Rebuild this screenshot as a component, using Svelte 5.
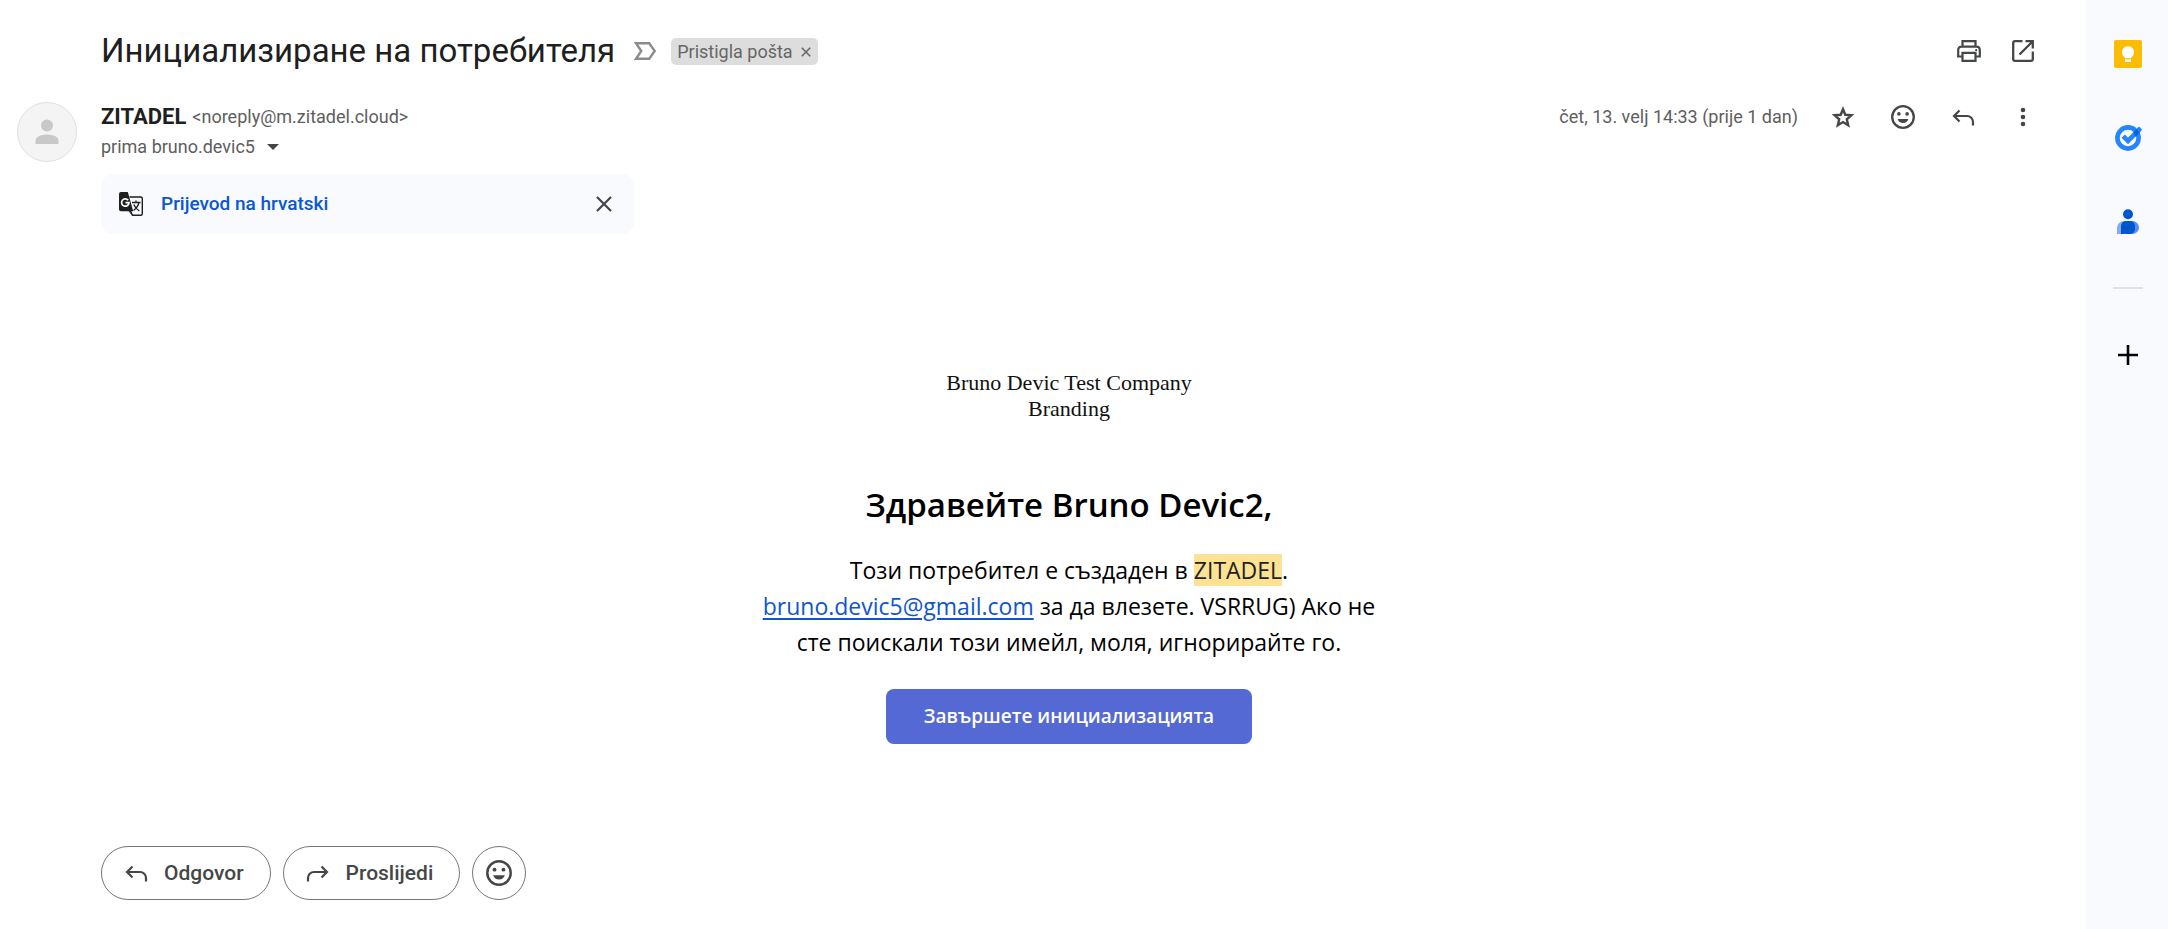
<script>
  const reply = 'M8.500 5.500 3 11l5.500 5.500M3.500 11H16a6 6 0 0 1 6 6v3.500';
</script>

{#snippet smile(size)}
  <svg width={size} height={size} viewBox="0 0 24 24" aria-hidden="true">
    <circle cx="12" cy="12" r="10.8" fill="none" stroke="currentColor" stroke-width="2.3" />
    <circle cx="7.9" cy="8.9" r="1.8" fill="currentColor" />
    <circle cx="16.1" cy="8.9" r="1.8" fill="currentColor" />
    <path d="M6.6 14h10.8c-.8 2.4-2.8 4-5.4 4s-4.600-1.600-5.400-4z" fill="currentColor" />
  </svg>
{/snippet}

{#snippet arrow(flip)}
  <svg class:flip width="24" height="24" viewBox="0 0 24 24" aria-hidden="true">
    <path d={reply} fill="none" stroke="currentColor" stroke-width="2.2" />
  </svg>
{/snippet}

<div class="app">
  <main>
    <header class="subject">
      <h1>Инициализиране на потребителя</h1>
      <svg class="important" width="22" height="18" viewBox="0 0 22 18" aria-hidden="true">
        <path d="M2 1.300h13.200L20.700 9l-5.500 7.700H2L7.300 9z" fill="none" stroke="#8c8c8c" stroke-width="2.4" />
      </svg>
      <span class="tag">
        <span>Pristigla pošta</span>
        <button aria-label="Ukloni oznaku">
          <svg width="10" height="12" viewBox="0 0 10 12"><path d="M.8 2.800l8.400 8.400M9.200 2.800.8 11.200" stroke="#666" stroke-width="1.600" /></svg>
        </button>
      </span>
      <div class="tools">
        <button class="icon" aria-label="Ispis">
          <svg width="24" height="22" viewBox="0 0 24 22">
            <g fill="none" stroke="currentColor" stroke-width="2.200">
              <path d="M5.500 6.500V1.200h13v5.300M5.500 16.500H1.200V10c0-2 1.300-3.400 3.300-3.400h15c2 0 3.300 1.400 3.300 3.400v6.500h-4.300" />
              <path d="M5.500 12.800h13v8h-13z" />
            </g>
            <circle cx="19.200" cy="10.200" r="1.100" fill="currentColor" />
          </svg>
        </button>
        <button class="icon" aria-label="U novom prozoru">
          <svg width="22" height="22" viewBox="0 0 22 22" fill="none" stroke="currentColor" stroke-width="2.300">
            <path d="M10.500 1.200H3a1.800 1.800 0 0 0-1.800 1.800v16A1.800 1.800 0 0 0 3 20.800h16a1.800 1.800 0 0 0 1.800-1.800v-7.500M13.500 1.200h7.300v7.300M20.300 1.700 7.500 14.500" />
          </svg>
        </button>
      </div>
    </header>

    <section class="meta">
      <div class="avatar">
        <svg width="24" height="26" viewBox="0 0 24 26" fill="#c8c8c8" aria-hidden="true">
          <circle cx="12" cy="6.500" r="6" />
          <path d="M.5 25v-3.500C.5 17.800 6 15.500 12 15.500s11.500 2.300 11.500 6V25z" />
        </svg>
      </div>
      <div class="people">
        <div class="line"><strong>ZITADEL</strong><span>&lt;noreply@m.zitadel.cloud&gt;</span></div>
        <div class="line to">
          <span>prima bruno.devic5</span>
          <button aria-label="Prikaži pojedinosti">
            <svg width="12" height="6" viewBox="0 0 12 6"><path d="M0 0h12L6 6z" fill="#444746" /></svg>
          </button>
        </div>
      </div>
      <div class="actions">
        <time>čet, 13. velj 14:33 (prije 1 dan)</time>
        <button class="icon" aria-label="Zvjezdica">
          <svg width="24" height="24" viewBox="0 0 24 24">
            <path d="M12 4.200l2.300 5.600 6.100.5-4.600 4 1.400 6L12 17.100l-5.200 3.200 1.400-6-4.600-4 6.100-.5z" fill="none" stroke="currentColor" stroke-width="2.400" />
          </svg>
        </button>
        <button class="icon" aria-label="Dodaj reakciju">{@render smile(24)}</button>
        <button class="icon" aria-label="Odgovori">{@render arrow(false)}</button>
        <button class="icon" aria-label="Više">
          <svg width="6" height="20" viewBox="0 0 6 20" fill="currentColor"><circle cx="3" cy="3" r="2.300" /><circle cx="3" cy="10" r="2.300" /><circle cx="3" cy="17" r="2.300" /></svg>
        </button>
      </div>
    </section>

    <div class="content">
      <div class="translate">
        <svg width="24" height="24" viewBox="0 0 24 24" aria-hidden="true">
          <path d="M10.500 5H21.800A1.500 1.500 0 0 1 23.300 6.500v15.300a1.500 1.500 0 0 1-1.500 1.500H13.500L11 18" fill="none" stroke="#1f1f1f" stroke-width="1.400" />
          <path d="M2 0h6.800l5.400 19.300H11l2.300 4.700-3.600-4.700H2a2 2 0 0 1-2-2V2a2 2 0 0 1 2-2z" fill="#1f1f1f" />
          <path d="M9.200 8.200A3.700 3.700 0 1 0 10 10.600H6.500" fill="none" stroke="#fff" stroke-width="1.700" />
          <path d="M13 10.500h8.500M17 8.500v2M20 10.500c-.7 3.200-2.600 5.800-5.500 8M14.800 12.500c1 2.600 2.900 4.800 5.500 6.500" fill="none" stroke="#1f1f1f" stroke-width="1.300" />
        </svg>
        <a href="#translate">Prijevod na hrvatski</a>
        <button aria-label="Zatvori">
          <svg width="16" height="16" viewBox="0 0 16 16"><path d="M1 1l14 14M15 1 1 15" stroke="#444746" stroke-width="2.200" /></svg>
        </button>
      </div>

      <article>
        <p class="brand">Bruno Devic Test Company<br />Branding</p>
        <h2>Здравейте Bruno Devic2,</h2>
        <p class="text">
          Този потребител е създаден в <mark>ZITADEL</mark>.<br />
          <a href="mailto:bruno.devic5@gmail.com">bruno.devic5@gmail.com</a> за да влезете. VSRRUG) Ако не<br />
          сте поискали този имейл, моля, игнорирайте го.
        </p>
        <a class="cta" href="#init">Завършете инициализацията</a>
      </article>

      <footer>
        <button class="pill">{@render arrow(false)}Odgovor</button>
        <button class="pill">{@render arrow(true)}Proslijedi</button>
        <button class="pill round" aria-label="Dodaj reakciju">{@render smile(26)}</button>
      </footer>
    </div>
  </main>

  <aside>
    <button aria-label="Keep">
      <svg width="28" height="28" viewBox="0 0 28 28">
        <rect width="28" height="28" rx="2" fill="#fbbc04" />
        <path d="M14 6.300a6 6 0 0 0-3.300 11v.9h6.600v-.9A6 6 0 0 0 14 6.300zM11 19.600h6v2.400h-6z" fill="#fff" />
      </svg>
    </button>
    <button aria-label="Tasks">
      <svg width="28" height="28" viewBox="0 0 28 28" fill="none">
        <circle cx="14" cy="14" r="10.600" stroke="#2684fc" stroke-width="4.600" />
        <path d="M9.200 12.200 14 17 25.800 5.200" stroke="#2684fc" stroke-width="4.600" />
        <path d="m19.300 8.400 3.200-3.200 3.300 3.300-3.200 3.200-1 1z" fill="#0066da" />
        <path d="m22.600 5.100 2.500-2.500 3 3-2.500 2.500z" fill="#2684fc" />
      </svg>
    </button>
    <button aria-label="Kontakti">
      <svg width="22" height="26" viewBox="0 0 22 26">
        <path d="M9 12h3v13H0v-6a7 7 0 0 1 7-7z" fill="#86a9ff" />
        <path d="M11 12h4.500a6.500 6.500 0 0 1 0 13H11z" fill="#578cff" />
        <rect x="4" y="12" width="14" height="13" rx="5" fill="#0057cc" />
        <path d="M4 17h3v8H4z" fill="#0057cc" />
        <circle cx="11" cy="5.200" r="5" fill="#0057cc" />
      </svg>
    </button>
    <hr />
    <button aria-label="Dodaci">
      <svg width="20" height="20" viewBox="0 0 20 20"><path d="M10 0v20M0 10h20" stroke="#000" stroke-width="2.600" /></svg>
    </button>
  </aside>
</div>

<style>
  :global(body) { background: #fff; }
  .app {
    display: flex;
    min-height: 100vh;
    font: 18px/30px Roboto, sans-serif;
    color: #5e5e5e;
  }
  main { flex: 1; min-width: 0; padding-top: 31px; }
  button {
    display: flex;
    align-items: center;
    justify-content: center;
    padding: 0;
    border: 0;
    background: none;
    color: #444746;
    font: inherit;
    cursor: pointer;
  }
  .icon { width: 40px; height: 40px; }
  .flip { transform: scaleX(-1); }

  .subject { display: flex; align-items: center; height: 40px; padding: 0 43px 0 101px; }
  h1 { margin: 0; font-size: 33px; font-weight: 400; line-height: 40px; color: #1f1f1f; }
  .important { margin: 0 15px 0 19px; }
  .tag {
    display: flex;
    align-items: center;
    gap: 8px;
    padding: 0 7px 0 6px;
    border-radius: 5px;
    background: #ddd;
    color: #666;
    line-height: 27px;
  }
  .tools { display: flex; gap: 14px; margin-left: auto; }

  .meta { display: flex; padding: 31px 43px 0 17px; }
  .avatar {
    display: flex;
    align-items: center;
    justify-content: center;
    box-sizing: border-box;
    width: 60px;
    height: 60px;
    margin-right: 24px;
    border: 1px solid #e0e0e0;
    border-radius: 50%;
    background: #f4f4f4;
  }
  .line { display: flex; align-items: center; gap: 6px; height: 30px; }
  .to { gap: 12px; }
  strong { font-size: 22px; font-weight: 700; color: #1f1f1f; }
  .actions { display: flex; align-items: center; gap: 20px; height: 30px; margin-left: auto; }
  time { margin-right: 5px; }

  .content { padding: 12px 49px 29px 101px; }
  .translate {
    display: flex;
    align-items: center;
    box-sizing: border-box;
    width: 533px;
    max-width: 100%;
    height: 60px;
    padding: 0 22px 0 18px;
    border-radius: 12px;
    background: #f8fafd;
  }
  .translate a {
    margin: 0 auto 0 18px;
    font-size: 19px;
    font-weight: 500;
    color: #0b57d0;
    text-decoration: none;
  }

  article {
    display: flex;
    flex-direction: column;
    align-items: center;
    padding: 136px 0 102px;
    text-align: center;
    font-family: "Open Sans", "Noto Sans", sans-serif;
    color: #000;
  }
  p, h2 { margin: 0; }
  .brand { font: 22px/26px "Liberation Serif", serif; color: #111; }
  h2 { margin: 58px 0 22px; font-size: 33px; font-weight: 600; line-height: 50px; }
  .text { font-size: 23px; line-height: 36px; }
  .text a { color: #1155cc; text-decoration-thickness: 2px; text-underline-offset: 3px; }
  mark { background: #fde293; color: #222; }
  .cta {
    margin-top: 29px;
    padding: 0 38px;
    border-radius: 8px;
    background: #5469d4;
    color: #fff;
    font-size: 19px;
    font-weight: 600;
    line-height: 55px;
    text-decoration: none;
  }

  footer { display: flex; gap: 12px; }
  .pill {
    gap: 16px;
    box-sizing: border-box;
    height: 54px;
    padding: 0 26px 0 22px;
    border: 1px solid #747775;
    border-radius: 27px;
    font-size: 21px;
    font-weight: 500;
  }
  .round { width: 54px; padding: 0; }

  aside {
    display: flex;
    flex-direction: column;
    align-items: center;
    gap: 28px;
    box-sizing: border-box;
    width: 82px;
    padding: 26px 0 0 2px;
    background: #f8fafd;
  }
  aside button { width: 56px; height: 56px; }
  hr { width: 30px; height: 2px; margin: 9px 0 10px; border: 0; background: #e0e1e3; }
</style>
